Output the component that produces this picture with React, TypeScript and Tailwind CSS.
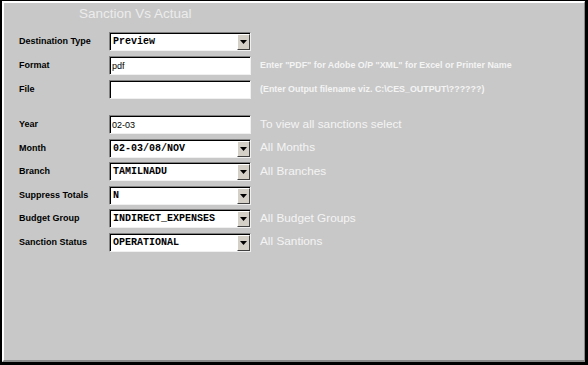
const rowsTop = [
  { label: "Destination Type", kind: "select", value: "Preview", hint: "" },
  {
    label: "Format",
    kind: "text",
    value: "pdf",
    hint: 'Enter "PDF" for Adobe O/P "XML" for Excel or Printer Name',
  },
  {
    label: "File",
    kind: "text",
    value: "",
    hint: "(Enter Output filename viz. C:\\CES_OUTPUT\\??????)",
  },
];

const rowsBottom = [
  { label: "Year", kind: "text", value: "02-03", hint: "To view all sanctions select" },
  { label: "Month", kind: "select", value: "02-03/08/NOV", hint: "All Months" },
  { label: "Branch", kind: "select", value: "TAMILNADU", hint: "All Branches" },
  { label: "Suppress Totals", kind: "select", value: "N", hint: "" },
  { label: "Budget Group", kind: "select", value: "INDIRECT_EXPENSES", hint: "All Budget Groups" },
  { label: "Sanction Status", kind: "select", value: "OPERATIONAL", hint: "All Santions" },
];

type Row = { label: string; kind: string; value: string; hint: string };

const Field = ({ row, smallHint }: { row: Row; smallHint: boolean }) => (
  <div className="flex items-center h-[19px]">
    <div className="w-[90px] text-[9px] font-bold text-black leading-none">{row.label}</div>
    <div className="relative w-[142px] h-[19px] bg-white border border-t-[#808080] border-l-[#808080] border-b-[#f0f0f0] border-r-[#f0f0f0] shadow-[inset_1px_1px_0_#000] flex items-center">
      {row.kind === "select" ? (
        <>
          <span className="pl-[3px] pt-[1px] font-['Liberation_Mono',monospace] font-bold text-[10px] text-black leading-none">
            {row.value}
          </span>
          <div className="absolute right-0 top-[1px] bottom-0 w-[13px] bg-[#d4d0c8] border border-t-white border-l-white border-b-[#404040] border-r-[#404040] flex items-center justify-center">
            <svg width="7" height="4" viewBox="0 0 7 4">
              <polygon points="0,0 7,0 3.5,4" fill="#000" />
            </svg>
          </div>
        </>
      ) : (
        <span className="pl-[2px] pt-[1px] text-[9px] text-black leading-none">{row.value}</span>
      )}
    </div>
    {row.hint && (
      <div
        className={
          smallHint
            ? "ml-[9px] text-[8.9px] font-bold text-[#f4f4f4] leading-none whitespace-nowrap"
            : "ml-[9px] text-[11.8px] text-[#f4f4f4] leading-none whitespace-nowrap"
        }
      >
        {row.hint}
      </div>
    )}
  </div>
);

export default function App() {
  return (
    <div className="w-[588px] h-[365px] font-['Liberation_Sans',Arial,sans-serif] border-t border-l-2 border-r-[3px] border-b-[3px] border-black bg-black">
      <div className="w-full h-full bg-[#c8c8c8] border-t-2 border-l-2 border-t-white border-l-white border-r border-b-2 border-r-[#8a8a8a] border-b-[#8a8a8a]">
        <div className="h-[29px] pl-[75px] pb-[7px] flex items-center text-[13.5px] text-[#ececec] leading-none">
          Sanction Vs Actual
        </div>
        <div className="pl-[15px] flex flex-col gap-[5px]">
          {rowsTop.map((r) => (
            <Field key={r.label} row={r} smallHint />
          ))}
        </div>
        <div className="pl-[15px] mt-[16px] flex flex-col gap-[4.5px]">
          {rowsBottom.map((r) => (
            <Field key={r.label} row={r} smallHint={false} />
          ))}
        </div>
      </div>
    </div>
  );
}
